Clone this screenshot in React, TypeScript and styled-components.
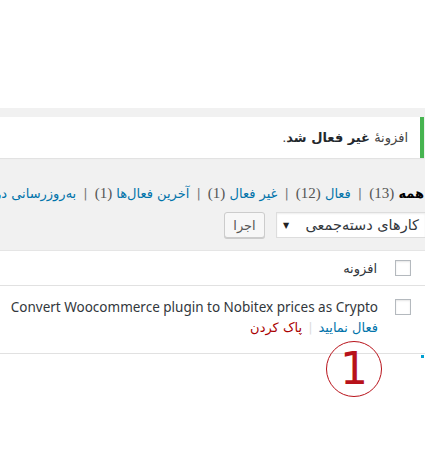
import React from "react";
import styled, { createGlobalStyle } from "styled-components";

const Global = createGlobalStyle`
  html, body { margin: 0; padding: 0; background: #fff; }
  body { width: 425px; height: 465px; overflow: hidden; }
  * { box-sizing: border-box; }
`;

const Page = styled.div`
  position: relative;
  width: 425px;
  height: 465px;
  overflow: hidden;
  direction: rtl;
  font-family: "Noto Sans", "DejaVu Sans", sans-serif;
  font-size: 14px;
  color: #444;
  background: #fff;
`;

const TopSpace = styled.div`
  height: 108px;
  background: #fff;
`;

const Wrap = styled.div`
  background: #f1f1f1;
  padding: 9px 1px 12px 0;
`;

const Notice = styled.div`
  height: 41px;
  display: flex;
  align-items: center;
  background: #fff;
  border-right: 4px solid #46b450;
  box-shadow: 0 1px 1px rgba(0, 0, 0, 0.06);
  padding-right: 12px;
  font-family: "DejaVu Sans", sans-serif;
  font-size: 13px;
  color: #444;
  white-space: nowrap;
  b { color: #23282d; }
`;

const Filters = styled.div`
  margin-top: 22px;
  height: 26px;
  display: flex;
  align-items: center;
  white-space: nowrap;
  overflow: hidden;
  font-family: "DejaVu Sans", sans-serif;
  font-size: 13px;
  color: #555;
`;

const FilterItem = styled.span<{ $current?: boolean }>`
  color: ${(p) => (p.$current ? "#000" : "#0073aa")};
  font-weight: ${(p) => (p.$current ? 700 : 400)};
`;

const Count = styled.span`
  color: #555;
  font-family: "Liberation Serif", serif;
  font-size: 15px;
`;

const Sep = styled.span`
  color: #777;
  margin: 0 7px;
`;

const BulkBar = styled.div`
  margin-top: 6px;
  display: flex;
  align-items: center;
  gap: 11px;
  margin-right: -2px;
`;

const Select = styled.div`
  width: 150px;
  height: 26px;
  display: flex;
  align-items: center;
  justify-content: space-between;
  padding: 0 6px 0 6px;
  background: #fff;
  border: 1px solid #ddd;
  box-shadow: inset 0 1px 2px rgba(0, 0, 0, 0.07);
  font-family: "DejaVu Sans", sans-serif;
  font-size: 14.5px;
  color: #32373c;
`;

const Arrow = styled.span`
  font-size: 8px;
  color: #222;
`;

const Button = styled.div`
  width: 41px;
  height: 26px;
  display: flex;
  align-items: center;
  justify-content: center;
  background: #f7f7f7;
  border: 1px solid #ccc;
  border-radius: 3px;
  box-shadow: 0 1px 0 #ccc;
  font-family: "DejaVu Sans", sans-serif;
  font-size: 13px;
  color: #555;
`;

const Table = styled.div`
  background: #fff;
  border-top: 1px solid #e5e5e5;
`;

const HeadRow = styled.div`
  height: 35px;
  display: flex;
  align-items: center;
  padding-right: 14px;
  gap: 18px;
  border-bottom: 1px solid #e1e1e1;
`;

const Check = styled.span`
  flex: none;
  width: 16px;
  height: 16px;
  border: 1px solid #b4b9be;
  background: #fff;
  box-shadow: inset 0 1px 2px rgba(0, 0, 0, 0.1);
`;

const HeadLabel = styled.span`
  font-family: "DejaVu Sans", sans-serif;
  font-size: 13px;
  color: #32373c;
`;

const PluginRow = styled.div`
  height: 68px;
  display: flex;
  align-items: flex-start;
  padding: 13px 14px 0 0;
  gap: 17px;
  border-bottom: 1px solid #e1e1e1;
`;

const PluginInfo = styled.div`
  display: flex;
  flex-direction: column;
  white-space: nowrap;
`;

const PluginName = styled.div`
  margin-top: -3px;
  line-height: 22px;
  font-family: "Noto Sans", sans-serif;
  font-size: 13.5px;
  color: #32373c;
`;

const Actions = styled.div`
  line-height: 20px;
  font-family: "DejaVu Sans", sans-serif;
  font-size: 13px;
  display: flex;
  align-items: center;
`;

const ActionLink = styled.span<{ $danger?: boolean }>`
  color: ${(p) => (p.$danger ? "#a00" : "#0073aa")};
`;

const ActionSep = styled.span`
  color: #ddd;
  margin: 0 6px;
`;

const NextRow = styled.div`
  position: relative;
  height: 120px;
  background: #fff;
  &::before {
    content: "";
    position: absolute;
    right: 1px;
    top: 1px;
    width: 3px;
    height: 3px;
    background: #00a0d2;
  }
`;

const Marker = styled.div`
  position: absolute;
  left: 326px;
  top: 341px;
  width: 56px;
  height: 56px;
  border: 1.5px solid #b8121a;
  border-radius: 50%;
  display: flex;
  align-items: center;
  justify-content: center;
  font-family: "DejaVu Sans", sans-serif;
  font-size: 44px;
  line-height: 1;
  color: #b8121a;
  direction: ltr;
`;

export default function App() {
  return (
    <>
      <Global />
      <Page>
        <TopSpace />
        <Wrap>
          <Notice>
            <span>
              افزونهٔ <b>غیر فعال شد</b>.
            </span>
          </Notice>
          <Filters>
            <FilterItem $current>همه</FilterItem>&nbsp;<Count>(13)</Count>
            <Sep>|</Sep>
            <FilterItem>فعال</FilterItem>&nbsp;<Count>(12)</Count>
            <Sep>|</Sep>
            <FilterItem>غیر فعال</FilterItem>&nbsp;<Count>(1)</Count>
            <Sep>|</Sep>
            <FilterItem>آخرین فعال‌ها</FilterItem>&nbsp;<Count>(1)</Count>
            <Sep>|</Sep>
            <FilterItem>به‌روزرسانی در دسترس</FilterItem>
          </Filters>
          <BulkBar>
            <Select>
              <span>کارهای دسته‌جمعی</span>
              <Arrow>▼</Arrow>
            </Select>
            <Button>اجرا</Button>
          </BulkBar>
        </Wrap>
        <Table>
          <HeadRow>
            <Check />
            <HeadLabel>افزونه</HeadLabel>
          </HeadRow>
          <PluginRow>
            <Check />
            <PluginInfo>
              <PluginName>
                Convert Woocommerce plugin to Nobitex prices as Crypto
              </PluginName>
              <Actions>
                <ActionLink>فعال نمایید</ActionLink>
                <ActionSep>|</ActionSep>
                <ActionLink $danger>پاک کردن</ActionLink>
              </Actions>
            </PluginInfo>
          </PluginRow>
          <NextRow />
        </Table>
        <Marker>1</Marker>
      </Page>
    </>
  );
}
